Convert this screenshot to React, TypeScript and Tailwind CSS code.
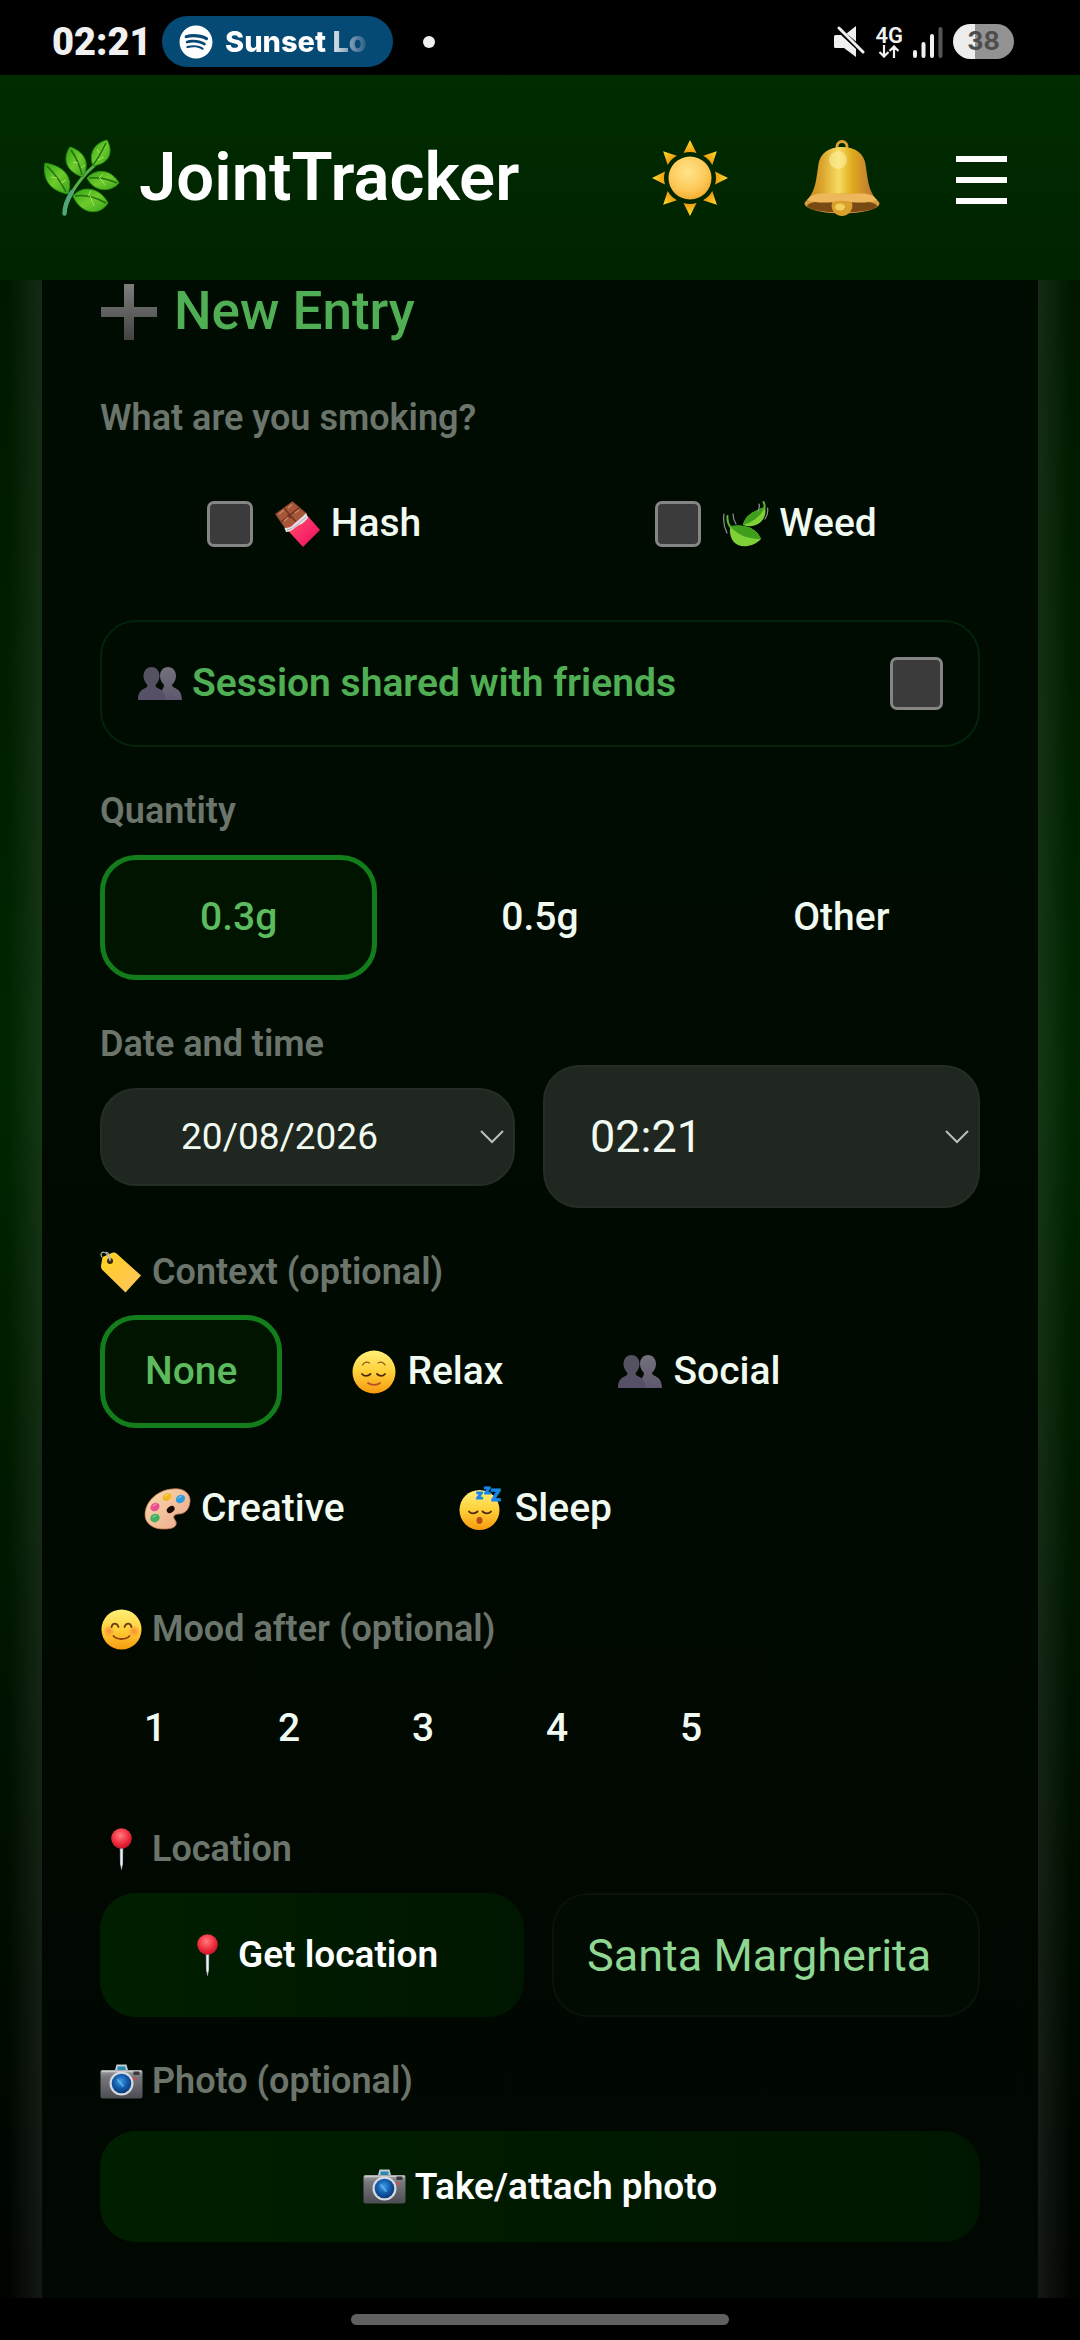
import type { ReactNode } from "react";
import { FaSpotify } from "react-icons/fa";

function Gradients() {
  return (
    <svg width="0" height="0" className="absolute" aria-hidden="true">
      <defs>
        <linearGradient id="leaf" x1="0" y1="0" x2="1" y2="1">
          <stop offset="0" stopColor="#2fa313" />
          <stop offset="0.5" stopColor="#6ecb2c" />
          <stop offset="1" stopColor="#3aa51a" />
        </linearGradient>
        <radialGradient id="sunDisk" cx="0.45" cy="0.35" r="0.7">
          <stop offset="0" stopColor="#ffe58a" />
          <stop offset="0.6" stopColor="#fdc95a" />
          <stop offset="1" stopColor="#f3a92b" />
        </radialGradient>
        <linearGradient id="ray" x1="0" y1="0" x2="0" y2="1">
          <stop offset="0" stopColor="#ffdf2b" />
          <stop offset="1" stopColor="#ef9a10" />
        </linearGradient>
        <linearGradient id="bellBody" x1="0" y1="0" x2="1" y2="0">
          <stop offset="0" stopColor="#c98a22" />
          <stop offset="0.2" stopColor="#dca52c" />
          <stop offset="0.45" stopColor="#f6dc62" />
          <stop offset="0.65" stopColor="#e0ab1c" />
          <stop offset="0.85" stopColor="#c98a2c" />
          <stop offset="1" stopColor="#b87530" />
        </linearGradient>
        <linearGradient id="face" x1="0" y1="0" x2="0" y2="1">
          <stop offset="0" stopColor="#fff07a" />
          <stop offset="0.5" stopColor="#ffd038" />
          <stop offset="1" stopColor="#f79a10" />
        </linearGradient>
        <radialGradient id="blush">
          <stop offset="0" stopColor="#f9703a" stopOpacity="0.7" />
          <stop offset="1" stopColor="#f9703a" stopOpacity="0" />
        </radialGradient>
        <linearGradient id="tag" x1="0" y1="0" x2="1" y2="1">
          <stop offset="0" stopColor="#ffd21c" />
          <stop offset="1" stopColor="#ffc261" />
        </linearGradient>
        <radialGradient id="ball" cx="0.45" cy="0.35" r="0.65">
          <stop offset="0" stopColor="#ff7a80" />
          <stop offset="0.6" stopColor="#f02f3e" />
          <stop offset="1" stopColor="#c8102a" />
        </radialGradient>
        <linearGradient id="cameraBody" x1="0" y1="0" x2="0" y2="1">
          <stop offset="0" stopColor="#a2a2a6" />
          <stop offset="0.25" stopColor="#77777b" />
          <stop offset="1" stopColor="#4d4c53" />
        </linearGradient>
        <radialGradient id="lens" cx="0.45" cy="0.4" r="0.6">
          <stop offset="0" stopColor="#3f9be6" />
          <stop offset="0.6" stopColor="#1259a8" />
          <stop offset="1" stopColor="#0a3a78" />
        </radialGradient>
        <linearGradient id="plus" x1="0" y1="0" x2="0" y2="1">
          <stop offset="0" stopColor="#7d7d7d" />
          <stop offset="1" stopColor="#434343" />
        </linearGradient>
        <linearGradient id="personFront" x1="0" y1="0" x2="0" y2="1">
          <stop offset="0" stopColor="#55525f" />
          <stop offset="1" stopColor="#565068" />
        </linearGradient>
        <linearGradient id="personBack" x1="0" y1="0" x2="0" y2="1">
          <stop offset="0" stopColor="#74717c" />
          <stop offset="1" stopColor="#5e586f" />
        </linearGradient>
        <linearGradient id="wrapper" x1="0" y1="0" x2="1" y2="1">
          <stop offset="0" stopColor="#ff5a5c" />
          <stop offset="0.6" stopColor="#f9266a" />
          <stop offset="1" stopColor="#e0104f" />
        </linearGradient>
        <linearGradient id="skin" x1="0" y1="0" x2="1" y2="1">
          <stop offset="0" stopColor="#f9dcae" />
          <stop offset="1" stopColor="#eda68a" />
        </linearGradient>
      </defs>
    </svg>
  );
}

function Emoji({ w, h, vb, children }: { w: number; h: number; vb: string; children: ReactNode }) {
  return (
    <svg width={w} height={h} viewBox={vb} fill="none" className="shrink-0 overflow-visible" aria-hidden="true">
      {children}
    </svg>
  );
}

function Herb() {
  return (
    <Emoji w={76} h={76} vb="0 0 76 76">
      <path d="M20.5 73C21 64 25 54 39 37C45 29 52 26 56 18" stroke="#55b04a" strokeWidth="3" strokeLinecap="round" />
      <path d="M20.5 73.500C20.500 66 23 60 28 52" stroke="#4fa777" strokeWidth="4.500" strokeLinecap="round" />
      <path d="M49 26C44 13 51 3 63 0C69 11 67 23 49 26Z" fill="url(#leaf)" stroke="#2b8f12" />
      <path d="M39 37C20 31 19 17 26 7C39 11 47 22 39 37Z" fill="url(#leaf)" stroke="#2b8f12" />
      <path d="M24 54C3 50 -1 37 1 23C19 26 30 36 24 54Z" fill="url(#leaf)" stroke="#2b8f12" />
      <path d="M43 38C52 28 67 29 75 43C66 53 50 52 43 38Z" fill="url(#leaf)" stroke="#2b8f12" />
      <path d="M29 56C38 45 56 47 64 63C56 76 37 75 29 56Z" fill="url(#leaf)" stroke="#2b8f12" />
      <path d="M49 25C54 19 58 11 62 3M38 35C36 26 32 17 27 10M22 52C17 42 10 33 3 26M45 38C55 37 64 39 73 43M31 56C42 54 53 58 62 63" stroke="#256f10" strokeWidth="1.500" />
      <path d="M54 20L60 17M55 13L53 9M37 28L41 25M34 23L29 22M17 43L22 40M13 38L7 37M55 38L59 34M56 38L61 45M44 56L47 51M46 56L50 66" stroke="#a4e35a" strokeWidth="1" />
    </Emoji>
  );
}

const rayAngles = [0, 45, 90, 135, 180, 225, 270, 315];

function Sun() {
  return (
    <Emoji w={76} h={76} vb="0 0 76 76">
      {rayAngles.map((a) => (
        <path key={a} d="M38 0L44.500 13Q38 11 31.500 13Z" fill="url(#ray)" transform={`rotate(${a} 38 38)`} />
      ))}
      <circle cx="38" cy="38" r="21.500" fill="url(#sunDisk)" />
    </Emoji>
  );
}

function Bell() {
  return (
    <Emoji w={76} h={76} vb="0 0 76 76">
      <circle cx="38" cy="6.500" r="5" stroke="#d9a033" strokeWidth="3" />
      <path d="M38 7C24 7 16 14 14.500 24C12 40 12 48 5 58H71C64 48 64 40 61.500 24C60 14 52 7 38 7Z" fill="url(#bellBody)" />
      <ellipse cx="34" cy="20" rx="9" ry="9" fill="#fff3a8" opacity="0.55" />
      <ellipse cx="38" cy="63.500" rx="37.500" ry="10" fill="#d99b3f" />
      <ellipse cx="38" cy="66" rx="35" ry="6.500" fill="#7a4a14" />
      <path d="M3 60C9 51 20 54 38 54C56 54 67 51 73 60C62 64 52 62 38 62C24 62 14 64 3 60Z" fill="#eeb75c" />
      <path d="M28 63C28 60 48 60 48 63C50 70 44 76 38 76C32 76 26 70 28 63Z" fill="#d9a12b" />
      <ellipse cx="36" cy="67" rx="5" ry="3.500" fill="#f3cf5c" />
    </Emoji>
  );
}

function Chocolate() {
  return (
    <Emoji w={46} h={46} vb="0 0 46 46">
      <path d="M17.500 0.500L32 13L12 30L0.500 13Z" fill="#a5573a" stroke="#7c3c26" strokeLinejoin="round" />
      <path d="M9 7L22 22M6 21L25 6M12.500 13.500L16 17" stroke="#6e3320" strokeWidth="1.300" />
      <path d="M4 13L9 9M13 7L17 3.500M9 20L13 16.500M20 12L24 9" stroke="#cf8866" strokeWidth="1.300" />
      <path d="M11.500 28L31 13L45 29L28 46Z" fill="url(#wrapper)" />
      <path d="M9.500 27C13 27 17 26 19 23C21 21 24 19 27 16C29 14 30 13 31 12L33 17C30 20 28 23 24 24C20 26 17 31 11 31Z" fill="#e4e4e8" />
      <path d="M12 29C18 28 22 24 31 16" stroke="#a5a5ad" />
    </Emoji>
  );
}

function FlutteringLeaves() {
  return (
    <Emoji w={46} h={46} vb="0 0 46 46">
      <path d="M7 26C23 22 34 28 38 38C26 50 5 48 7 26Z" fill="#7fd138" />
      <path d="M7 25C22 22 34 28 38 38C28 38 16 36 7 25Z" fill="#3f9f1c" />
      <path d="M20 24C22 14 31 10 42 6C45 18 34 29 20 24Z" fill="#7fd138" />
      <path d="M20 24C22 14 31 10 42 6C38 15 30 21 20 24Z" fill="#3f9f1c" />
      <path d="M8 27C5 23 4 19 4.500 15M41 8C42 6 41.500 3 40.500 1" stroke="#58b52c" strokeWidth="2" strokeLinecap="round" />
      <path d="M1 13C0 19 1 26 4 32M10 13C10 17 11 20 13 23M36 3C37 6 36 8 35 10M44.500 7C45.500 12 44 15 42 18" stroke="#8f958f" strokeWidth="1.200" strokeLinecap="round" />
    </Emoji>
  );
}

function People() {
  return (
    <Emoji w={46} h={46} vb="-1 -6 46 46">
      <path d="M30 0C35 0 38 4 38 9C38 13 36 16 34 18C34 22 44 20 44 33H18C18 26 26 24 26 18C24 16 22 13 22 9C22 4 25 0 30 0Z" fill="url(#personBack)" />
      <path d="M13.500 0C18.500 0 21.500 4 21.500 9C21.500 13 19.500 16 17.500 18C17.500 23 27.500 20 27.500 33H0C0 20 9.500 23 9.500 18C7.500 16 5.500 13 5.500 9C5.500 4 8.500 0 13.500 0Z" fill="url(#personFront)" />
    </Emoji>
  );
}

function Relieved() {
  return (
    <Emoji w={46} h={46} vb="-1 -1 46 46">
      <circle cx="22" cy="22" r="21.500" fill="url(#face)" />
      <path d="M10.500 15C12 12 15 11.500 17.500 13M33 15C31.500 12 28.500 11.500 26 13" stroke="#9a5a14" strokeWidth="1.300" strokeLinecap="round" />
      <path d="M10 24C12 26.500 16 26.500 18.500 24M25 24C27.500 26.500 31 26.500 33 24" stroke="#4c2810" strokeWidth="1.800" strokeLinecap="round" />
      <path d="M16 33C19 35.500 25 35.500 28 33" stroke="#b5502a" strokeWidth="1.800" strokeLinecap="round" />
    </Emoji>
  );
}

function Sleeping() {
  return (
    <Emoji w={46} h={46} vb="0 0 46 46">
      <circle cx="20.500" cy="24" r="20" fill="url(#face)" />
      <path d="M10 25.500C12 28 16 28 18.500 25.500M23.500 25.500C26 28 30 28 32 25.500" stroke="#4c2810" strokeWidth="1.800" strokeLinecap="round" />
      <ellipse cx="20.500" cy="34.500" rx="3" ry="3.400" fill="#b84a1c" />
      <g fill="#1688e8" stroke="#1688e8" fontFamily="Roboto, sans-serif" fontWeight="900">
        <text x="17" y="13" fontSize="13">z</text>
        <text x="25" y="8" fontSize="13">z</text>
        <text x="32" y="15" fontSize="16">Z</text>
      </g>
    </Emoji>
  );
}

function Palette() {
  return (
    <Emoji w={46} h={42} vb="0 0 46 42">
      <path d="M27 1C40 -1 46 7 45 14C44 22 40 26 33 26C28 27 28 29 30 32C33 36 31 41 20 41C8 42 0 35 0 27C0 13 13 2 27 1Z" fill="url(#skin)" stroke="#b9714f" strokeWidth="0.800" />
      <ellipse cx="25.700" cy="21.500" rx="4.300" ry="3" transform="rotate(-35 25.700 21.500)" fill="#1a0b05" />
      <ellipse cx="22" cy="9" rx="4.600" ry="3.800" transform="rotate(-35 22 9)" fill="#f2b81e" />
      <ellipse cx="35.500" cy="11" rx="4.800" ry="4" transform="rotate(-35 35.500 11)" fill="#2a9be0" />
      <ellipse cx="10" cy="19" rx="4.800" ry="4" transform="rotate(-35 10 19)" fill="#ec4f90" />
      <ellipse cx="10" cy="30" rx="4.800" ry="4" transform="rotate(-25 10 30)" fill="#3fb062" />
      <path d="M20 8L23 6.500M33.500 10L36.500 8M8 18L11 16M8 29L11 27.500" stroke="#fff" strokeOpacity="0.500" strokeLinecap="round" />
    </Emoji>
  );
}

function PriceTag() {
  return (
    <Emoji w={43} h={43} vb="0 0 43 43">
      <path d="M2.500 6L13 1.500Q15 1 16.500 2.500L41 24.500L25.500 41.500L2 18.500Q1 17 1 15Z" fill="url(#tag)" />
      <circle cx="10" cy="10" r="3" fill="#3a2505" />
      <path d="M10 10C9 5 6 1 3 1C0 2 1 5 2 6M10 10C11 6 9 2 6 1" stroke="#b9bdb9" strokeWidth="1.200" />
    </Emoji>
  );
}

function Smiling() {
  return (
    <Emoji w={43} h={43} vb="-1 -1 43 43">
      <circle cx="20.500" cy="20.500" r="20" fill="url(#face)" />
      <circle cx="8" cy="22" r="6" fill="url(#blush)" />
      <circle cx="33" cy="22" r="6" fill="url(#blush)" />
      <path d="M10.500 18C11.500 13.500 16 13.500 17.500 18M23.500 18C25 13.500 29.500 13.500 30.500 18" stroke="#6e3c10" strokeWidth="1.800" strokeLinecap="round" />
      <path d="M12.500 27C16 31 25 31 28.500 27" stroke="#8a4512" strokeWidth="1.800" strokeLinecap="round" />
    </Emoji>
  );
}

function Pin() {
  return (
    <Emoji w={43} h={43} vb="0 0 43 43">
      <path d="M19.800 19H23.200L23 36L21.500 42.500L20 36Z" fill="#b5bccb" />
      <path d="M21.500 20V38" stroke="#eef1f8" />
      <circle cx="21.500" cy="10.500" r="10.300" fill="url(#ball)" />
    </Emoji>
  );
}

function Camera() {
  return (
    <Emoji w={43} h={35} vb="0 0 43 35">
      <path d="M15 6L16.500 0.500H26.500L28 6Z" fill="#c4cdd4" />
      <path d="M17.500 2.500H25.500V6H17.500Z" fill="#2789b0" />
      <rect x="0.500" y="6" width="42" height="28.500" rx="2" fill="url(#cameraBody)" />
      <path d="M1.500 7.500H41.500" stroke="#c9c9cc" strokeWidth="1.500" />
      <rect x="33.500" y="7.500" width="6" height="3.500" rx="0.500" fill="#38383c" />
      <circle cx="34.500" cy="14.500" r="1.600" fill="#d84a52" />
      <circle cx="21.500" cy="19.500" r="12" fill="#d5dae2" />
      <circle cx="21.500" cy="19.500" r="9.800" fill="url(#lens)" />
      <path d="M18 16L23 22" stroke="#6cc0f5" strokeWidth="2" strokeLinecap="round" opacity="0.600" />
    </Emoji>
  );
}

function Plus() {
  return (
    <Emoji w={58} h={58} vb="0 0 58 58">
      <path d="M24 1H34V24H57V34H34V57H24V34H1V24H24Z" fill="url(#plus)" />
    </Emoji>
  );
}

function Muted() {
  return (
    <svg width="31" height="31" viewBox="0 0 31 31" aria-hidden="true">
      <path d="M1.500 9H7L22 23V31L10 22H1.500Q0 22 0 20.500V10.500Q0 9 1.500 9ZM12.500 7.500L22 0V15.500Z" fill="#f0f0f0" />
      <path d="M5 2L29 26" stroke="#f0f0f0" strokeWidth="3" strokeLinecap="round" />
    </svg>
  );
}

function StatusBar() {
  return (
    <div className="flex h-[75px] shrink-0 items-center bg-black pt-2 pr-[66px] pl-[52px] text-[#f0f0f0]">
      <span className="w-[110px] text-[38px] leading-none font-black">02:21</span>
      <div className="flex h-[51px] w-[231px] items-center gap-3 rounded-full bg-[#044a74] pl-[17px]">
        <FaSpotify className="size-[34px] shrink-0 text-white" />
        <span className="w-[146px] overflow-hidden bg-linear-to-r from-white from-70% to-[#044a74] bg-clip-text font-[Inter] text-[29px] leading-[40px] font-extrabold whitespace-nowrap text-transparent">
          Sunset Lo
        </span>
      </div>
      <span className="ml-[30px] size-3 rounded-full bg-[#f0f0f0]" />
      <div className="ml-auto flex items-center gap-[10px]">
        <Muted />
        <div className="flex flex-col items-center">
          <span className="text-[22px] leading-[19px] font-semibold">4G</span>
          <svg width="22" height="13" viewBox="0 0 22 13" fill="none" stroke="#f0f0f0" strokeWidth="2.200" aria-hidden="true">
            <path d="M6 0V11M1.500 7L6 11.500L10.500 7M16 13V2M11.500 6L16 1.500L20.500 6" />
          </svg>
        </div>
        <svg width="30" height="32" viewBox="0 0 30 32" fill="none" strokeWidth="4" strokeLinecap="round" aria-hidden="true">
          <path d="M2 26V30M10.500 18V30M19 10V30" stroke="#f0f0f0" />
          <path d="M27.500 3V30" stroke="#555" />
        </svg>
        <span className="flex h-[35px] w-[61px] items-center justify-center rounded-full bg-linear-to-r from-[#ededed] from-36% to-[#939393] to-36% font-[Inter] text-[25px] leading-none font-bold text-[#4d4d4d]">
          38
        </span>
      </div>
    </div>
  );
}

function Header() {
  return (
    <header className="flex h-[205px] shrink-0 items-center justify-between bg-linear-to-b from-[#002c00] to-[#002300] pr-[73px] pl-[44px]">
      <div className="flex items-center gap-[19px]">
        <Herb />
        <h1 className="text-[67px] leading-none font-semibold text-white">JointTracker</h1>
      </div>
      <div className="flex items-center gap-[76px]">
        <button type="button" aria-label="Light theme"><Sun /></button>
        <button type="button" aria-label="Notifications"><Bell /></button>
        <button type="button" aria-label="Menu" className="flex w-[51px] flex-col gap-[15px] pt-1">
          <span className="h-[6px] w-full bg-white" />
          <span className="h-[6px] w-full bg-white" />
          <span className="h-[6px] w-full bg-white" />
        </button>
      </div>
    </header>
  );
}

const legendClass = "flex h-[46px] items-center gap-[9px] text-[36px] font-semibold text-[#6c756c]";
const chipBase = "flex items-center justify-center gap-[10px] rounded-[36px] border-[5px] text-[39px] font-medium";
const chipOn = "border-[#127d1a] bg-[#001400] text-[#5cba5f]";
const chipOff = "border-transparent text-[#f1faf1]";
const greenButton = "flex items-center justify-center gap-[9px] rounded-[36px] bg-linear-to-r from-[#001f00] to-[#001600] text-[37px] font-semibold text-white";

function Section({ title, icon, gap, children }: { title: string; icon?: ReactNode; gap: string; children: ReactNode }) {
  return (
    <section aria-label={title}>
      <h3 className={`${legendClass} ${gap}`}>
        {icon}
        {title}
      </h3>
      {children}
    </section>
  );
}

function TickBox({ id, size }: { id: string; size: string }) {
  return <input id={id} type="checkbox" className={`${size} shrink-0 appearance-none rounded-[7px] border-[3px] border-[#858585] bg-[#3b3b3b]`} />;
}

function Chevron() {
  return (
    <svg width="24" height="14" viewBox="0 0 24 14" fill="none" stroke="#b9c0b9" strokeWidth="2" className="pointer-events-none absolute top-1/2 right-[11px] -translate-y-1/2" aria-hidden="true">
      <path d="M1 1L12 12L23 1" />
    </svg>
  );
}

const contexts = [
  { name: "None", icon: null },
  { name: "Relax", icon: <Relieved /> },
  { name: "Social", icon: <People /> },
  { name: "Creative", icon: <Palette /> },
  { name: "Sleep", icon: <Sleeping /> },
];

export default function App() {
  return (
    <div className="flex min-h-screen flex-col bg-black font-[Roboto,sans-serif]">
      <Gradients />
      <StatusBar />
      <Header />
      <main className="flex grow bg-linear-to-b from-[#001800] via-[#002600] via-40% to-[#000400]">
        <div className="w-[42px] shrink-0 bg-linear-to-r from-transparent from-20% to-white/8" />
        <div className="grow bg-linear-to-b from-[#000c02] via-[#000a01] to-[#010701] px-[58px] pb-[56px]">
          <h2 className="mb-[51px] flex h-[64px] items-center gap-[16px] text-[53px] font-medium text-[#50ae54]">
            <Plus />
            New Entry
          </h2>

          <Section title="What are you smoking?" gap="mb-[16px]">
            <div className="grid h-[133px] grid-cols-2 gap-6 text-[39px] font-medium text-[#f1faf1]">
              <label htmlFor="hash" className="flex items-center justify-center gap-[10px]">
                <TickBox id="hash" size="mr-[12px] size-[46px]" />
                <Chocolate />
                Hash
              </label>
              <label htmlFor="weed" className="flex items-center justify-center gap-[10px]">
                <TickBox id="weed" size="mr-[12px] size-[46px]" />
                <FlutteringLeaves />
                Weed
              </label>
            </div>
          </Section>

          <label htmlFor="shared" className="mt-[30px] mb-[41px] flex h-[127px] items-center gap-[9px] rounded-[36px] border-2 border-[#03230a] bg-[#000c01] px-[35px] text-[39px] font-semibold text-[#50ae54]">
            <People />
            <span className="grow">Session shared with friends</span>
            <TickBox id="shared" size="size-[53px]" />
          </label>

          <div className="flex flex-col gap-[41px]">
            <Section title="Quantity" gap="mb-[21px]">
              <div className="grid h-[125px] grid-cols-3 gap-6">
                <button type="button" className={`${chipBase} ${chipOn}`}>0.3g</button>
                <button type="button" className={`${chipBase} ${chipOff}`}>0.5g</button>
                <button type="button" className={`${chipBase} ${chipOff}`}>Other</button>
              </div>
            </Section>

            <Section title="Date and time" gap="-mb-[2px]">
              <div className="grid grid-cols-[415fr_437fr] items-center gap-7">
                <div className="relative h-[98px]">
                  <input type="text" aria-label="Date" defaultValue="20/08/2026" className="h-full w-full rounded-[36px] border-2 border-[#252d26] bg-[#1f2720] pr-[56px] text-center text-[37px] text-[#f1faf1]" />
                  <Chevron />
                </div>
                <div className="relative h-[143px]">
                  <input type="text" aria-label="Time" defaultValue="02:21" className="h-full w-full rounded-[36px] border-2 border-[#252d26] bg-[#1f2720] pr-[56px] pl-[45px] text-[45px] text-[#f1faf1]" />
                  <Chevron />
                </div>
              </div>
            </Section>

            <Section title="Context (optional)" icon={<PriceTag />} gap="mb-[20px]">
              <div className="flex flex-wrap gap-6">
                {contexts.map((c) => (
                  <button key={c.name} type="button" className={`${chipBase} h-[113px] px-[40px] ${c.name === "None" ? chipOn : chipOff}`}>
                    {c.icon}
                    {c.name}
                  </button>
                ))}
              </div>
            </Section>

            <Section title="Mood after (optional)" icon={<Smiling />} gap="mb-[20px]">
              <div className="flex gap-6">
                {[1, 2, 3, 4, 5].map((n) => (
                  <button key={n} type="button" className={`${chipBase} h-[113px] w-[110px] ${chipOff}`}>{n}</button>
                ))}
              </div>
            </Section>

            <Section title="Location" icon={<Pin />} gap="mb-[21px]">
              <div className="grid h-[124px] grid-cols-[424fr_428fr] gap-7">
                <button type="button" className={greenButton}>
                  <Pin />
                  Get location
                </button>
                <input type="text" aria-label="Place" defaultValue="Santa Margherita" className="h-full w-full min-w-0 rounded-[36px] border-2 border-[#0a120b] bg-[#010b02] px-[33px] text-[45px] text-[#8fd792]" />
              </div>
            </Section>

            <Section title="Photo (optional)" icon={<Camera />} gap="mb-[27px]">
              <button type="button" className={`${greenButton} h-[111px] w-full`}>
                <Camera />
                Take/attach photo
              </button>
            </Section>
          </div>
        </div>
        <div className="w-[42px] shrink-0 bg-linear-to-l from-transparent from-20% to-white/8" />
      </main>
      <footer className="flex h-[42px] shrink-0 items-center justify-center bg-black">
        <span className="h-[11px] w-[35%] rounded-full bg-[#606060]" />
      </footer>
    </div>
  );
}
